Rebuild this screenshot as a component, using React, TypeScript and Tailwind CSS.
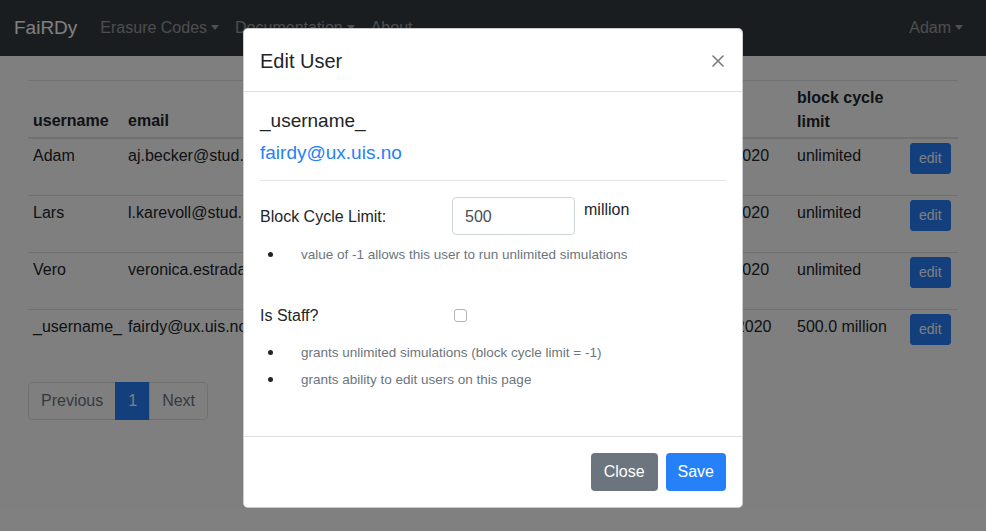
import React from "react";

const users = [
  { name: "Adam", email: "aj.becker@stud.uis.no", staff: "yes", joined: "Oct. 27, 2020", limit: "unlimited" },
  { name: "Lars", email: "l.karevoll@stud.uis.no", staff: "yes", joined: "Oct. 28, 2020", limit: "unlimited" },
  { name: "Vero", email: "veronica.estrada@stud.uis.no", staff: "yes", joined: "Oct. 28, 2020", limit: "unlimited" },
  { name: "_username_", email: "fairdy@ux.uis.no", staff: "no", joined: "Nov. 20, 2020", limit: "500.0 million" },
];

function Caret() {
  return <span className="ml-[4px] inline-block border-x-[4.5px] border-t-[5px] border-x-transparent border-t-current align-[3px]" />;
}

function NavLink({ label, caret }: { label: string; caret?: boolean }) {
  return (
    <span className="px-[8px] text-[16px] leading-[24px] text-white/50">
      {label}
      {caret && <Caret />}
    </span>
  );
}

function Bullet({ children }: { children: React.ReactNode }) {
  return (
    <div className="flex items-center pl-[8px] text-[13.5px] leading-[27px] text-[#6c757d]">
      <span className="mr-[28px] h-[5px] w-[5px] shrink-0 rounded-full bg-[#212529]" />
      {children}
    </div>
  );
}

export default function App() {
  return (
    <div className="relative h-[531px] overflow-hidden bg-white font-['Liberation_Sans',Arial,sans-serif] text-[16px] text-[#212529]">
      <nav className="flex h-[56px] items-center bg-[#343a40] pl-[14px] pr-[15px]">
        <span className="mr-[15px] text-[19px] leading-[30px] text-white">FaiRDy</span>
        <NavLink label="Erasure Codes" caret />
        <NavLink label="Documentation" caret />
        <NavLink label="About" />
        <div className="ml-auto">
          <NavLink label="Adam" caret />
        </div>
      </nav>

      <main className="mx-auto w-[930px] pt-[24px]">
        <div className="flex border-b-2 border-t border-[#dee2e6] font-bold leading-[24px]">
          <div className="flex w-[95px] items-end px-[5px] pb-[4px] pt-[5px]">username</div>
          <div className="flex w-[345px] items-end px-[5px] pb-[4px] pt-[5px]">email</div>
          <div className="flex w-[200px] items-end px-[5px] pb-[4px] pt-[5px]">staff</div>
          <div className="flex w-[124px] items-end px-[5px] pb-[4px] pt-[5px]">joined</div>
          <div className="flex w-[113px] items-end px-[5px] pb-[3px] pt-[5px]">block cycle limit</div>
          <div className="w-[53px]" />
        </div>
        {users.map((u, i) => (
          <div key={u.name} className={`flex leading-[24px] ${i === 0 ? "h-[56px]" : "h-[57px] border-t border-[#dee2e6]"}`}>
            <div className="w-[95px] overflow-hidden whitespace-nowrap px-[5px] pt-[5px]">{u.name}</div>
            <div className="w-[345px] whitespace-nowrap px-[5px] pt-[5px]">{u.email}</div>
            <div className="w-[200px] px-[5px] pt-[5px]">{u.staff}</div>
            <div className="w-[124px] whitespace-nowrap px-[5px] pt-[5px]">{u.joined}</div>
            <div className="w-[113px] whitespace-nowrap px-[5px] pt-[5px]">{u.limit}</div>
            <div className="w-[53px] px-[5px] pt-[4px]">
              <button className="rounded-[3px] border border-[#2680f8] bg-[#2680f8] px-[8px] py-[4px] text-[14px] leading-[21px] text-white">
                edit
              </button>
            </div>
          </div>
        ))}
        <div className="mt-[16px] flex leading-[20px]">
          <span className="rounded-l-[4px] border border-[#dee2e6] px-[12px] py-[8px] text-[#6c757d]">Previous</span>
          <span className="-ml-px border border-[#2680f8] bg-[#2680f8] px-[12px] py-[8px] text-white">1</span>
          <span className="-ml-px rounded-r-[4px] border border-[#dee2e6] px-[12px] py-[8px] text-[#6c757d]">Next</span>
        </div>
      </main>

      <div className="absolute inset-0 bg-black/50" />

      <div className="absolute left-[243px] top-[28px] w-[500px] rounded-[5px] border border-black/20 bg-white">
        <div className="flex items-center justify-between border-b border-[#dee2e6] px-[16px] pb-[15px] pt-[16px]">
          <h5 className="pt-[1px] text-[20px] font-medium leading-[30px]">Edit User</h5>
          <svg width="12" height="12" viewBox="0 0 12 12" className="mr-[2px] text-[#7a7a7a]">
            <path d="M1 1L11 11M11 1L1 11" stroke="currentColor" strokeWidth="1.6" strokeLinecap="round" />
          </svg>
        </div>

        <div className="h-[344px] p-[16px]">
          <div className="pt-[1px] text-[19px] leading-[24px]">_username_</div>
          <div className="mt-[8px] text-[19px] leading-[23px] text-[#2680f8]">fairdy@ux.uis.no</div>
          <hr className="mt-[16px] border-t border-black/10" />

          <div className="mt-[16px] flex items-start">
            <label className="w-[192px] pt-[8px] leading-[24px]">Block Cycle Limit:</label>
            <input
              readOnly
              value="500"
              className="h-[38px] w-[123px] rounded-[4px] border border-[#ced4da] px-[12px] pt-[1px] text-[16px] text-[#495057] outline-none"
            />
            <span className="ml-[9px] pt-[1px] leading-[24px]">million</span>
          </div>
          <div className="mt-[6px]">
            <Bullet>value of -1 allows this user to run unlimited simulations</Bullet>
          </div>

          <div className="mt-[35px] flex items-start">
            <label className="w-[192px] pt-[1px] leading-[24px]">Is Staff?</label>
            <input
              type="checkbox"
              readOnly
              className="ml-[2px] mt-[6px] h-[13px] w-[13px] appearance-none rounded-[3px] border border-[#b3b3b3] bg-white"
            />
          </div>
          <div className="mt-[11px]">
            <Bullet>grants unlimited simulations (block cycle limit = -1)</Bullet>
            <Bullet>grants ability to edit users on this page</Bullet>
          </div>
        </div>

        <div className="flex justify-end gap-[8px] border-t border-[#dee2e6] p-[16px]">
          <button className="h-[38px] rounded-[4px] bg-[#6c757d] px-[13px] leading-[24px] text-white">Close</button>
          <button className="h-[38px] rounded-[4px] bg-[#2680f8] px-[12px] leading-[24px] text-white">Save</button>
        </div>
      </div>
    </div>
  );
}
